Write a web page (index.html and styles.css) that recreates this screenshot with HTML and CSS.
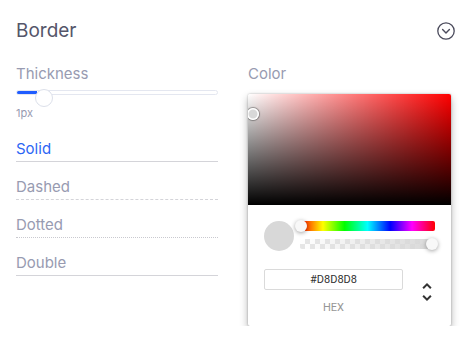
FILE: index.html
```html
<!DOCTYPE html>
<html lang="en">
  <head>
    <meta charset="UTF-8" />
    <meta name="viewport" content="width=device-width, initial-scale=1.0" />
    <title>Border</title>
    <link rel="stylesheet" href="styles.css">
  </head>
  <body>
    <div class="panel">
      <div class="header">
        <h1>Border</h1>
        <svg class="toggle-icon" width="18" height="18" viewBox="0 0 18 18">
          <circle cx="9" cy="9" r="8.2" fill="none" stroke="#4b4b5c" stroke-width="1.3" />
          <path d="M5.6 7.6 L9 11 L12.4 7.6" fill="none" stroke="#4b4b5c" stroke-width="1.4" stroke-linecap="round" stroke-linejoin="round" />
        </svg>
      </div>

      <div class="columns">
        <div class="col">
          <div class="label">Thickness</div>
          <div class="slider">
            <div class="track"><div class="fill"></div></div>
            <div class="thumb"></div>
          </div>
          <div class="value">1px</div>
          <ul class="styles">
            <li class="active solid">Solid</li>
            <li class="dashed">Dashed</li>
            <li class="dotted">Dotted</li>
            <li class="solid">Double</li>
          </ul>
        </div>

        <div class="col">
          <div class="label">Color</div>
          <div class="picker">
            <div class="saturation">
              <div class="pointer"></div>
            </div>
            <div class="picker-body">
              <div class="controls">
                <div class="swatch"></div>
                <div class="bars">
                  <div class="hue"><div class="knob knob-start"></div></div>
                  <div class="alpha"><div class="knob knob-end"></div></div>
                </div>
              </div>
              <div class="fields">
                <div class="field">
                  <input type="text" value="#D8D8D8" />
                  <label>hex</label>
                </div>
                <div class="arrows">
                  <svg viewBox="0 0 24 24" width="24" height="24">
                    <path fill="#333" d="M12,18.17L8.83,15L7.42,16.41L12,21L16.59,16.41L15.17,15M12,5.83L15.17,9L16.58,7.59L12,3L7.41,7.59L8.83,9L12,5.83Z" />
                  </svg>
                </div>
              </div>
            </div>
          </div>
        </div>
      </div>
    </div>
  </body>
</html>
```

FILE: styles.css
```css
body {
  margin: 0;
  background: #fff;
  font-family: Inter, "Noto Sans", sans-serif;
}
.panel {
  padding: 19px 14px 0 16px;
}
.header {
  display: flex;
  justify-content: space-between;
  align-items: center;
  height: 24px;
}
h1 {
  margin: 0;
  font-size: 19px;
  line-height: 24px;
  font-weight: 400;
  color: #55566a;
}
.toggle-icon {
  display: block;
  margin-top: -1px;
}
.columns {
  display: grid;
  grid-template-columns: 202px 203px;
  column-gap: 30px;
  margin-top: 21px;
}
.label {
  font-size: 15px;
  line-height: 20px;
  color: #989bb1;
}
.slider {
  position: relative;
  height: 16px;
  margin-top: 5px;
}
.track {
  margin-top: 6px;
  height: 3px;
  border: 1px solid #e4e7f0;
  border-radius: 3px;
  background: #fff;
}
.fill {
  width: 20px;
  height: 100%;
  background: #1f5cff;
  border-radius: 3px 0 0 3px;
}
.thumb {
  position: absolute;
  left: 19px;
  top: -1px;
  width: 16px;
  height: 16px;
  border: 1px solid #dce0ea;
  border-radius: 50%;
  background: #fff;
}
.value {
  font-size: 11px;
  line-height: 14px;
  color: #989bb1;
}
.styles {
  list-style: none;
  margin: 4px 0 0;
  padding: 0;
}
.styles li {
  padding: 15px 0 2px;
  font-size: 15px;
  line-height: 20px;
  color: #989bb1;
}
.styles li.solid {
  border-bottom: 1px solid #d4d4d9;
}
.styles li.dashed {
  border-bottom: 1px dashed #d4d4d9;
}
.styles li.dotted {
  border-bottom: 1px dotted #c9c9cf;
}
.styles li.active {
  color: #2c66f4;
}
.picker {
  margin-top: 10px;
  background: #fff;
  border-radius: 2px;
  box-shadow: 0 0 2px rgba(0, 0, 0, 0.3), 0 4px 8px rgba(0, 0, 0, 0.3);
  font-family: Roboto, "Liberation Sans", sans-serif;
}
.saturation {
  position: relative;
  height: 111px;
  border-radius: 2px 2px 0 0;
  overflow: hidden;
  background: linear-gradient(to top, #000, rgba(0, 0, 0, 0)),
    linear-gradient(to right, #fff, rgba(255, 255, 255, 0)), #f00;
}
.pointer {
  position: absolute;
  left: -1px;
  top: 14px;
  width: 12px;
  height: 12px;
  border-radius: 50%;
  background: #d8d8d8;
  box-shadow: inset 0 0 0 1.5px #fff, 0 0 1px 1px rgba(0, 0, 0, 0.35);
}
.picker-body {
  padding: 16px 16px 12px;
}
.controls {
  display: flex;
  gap: 6px;
}
.swatch {
  width: 30px;
  height: 30px;
  border-radius: 50%;
  background: #d8d8d8;
}
.bars {
  flex: 1;
}
.hue,
.alpha {
  position: relative;
  height: 10px;
  border-radius: 2px;
}
.hue {
  background: linear-gradient(to right, #f00 0%, #ff0 17%, #0f0 33%, #0ff 50%, #00f 67%, #f0f 83%, #f00 100%);
}
.alpha {
  margin-top: 8px;
  background: linear-gradient(to right, rgba(216, 216, 216, 0), #d8d8d8),
    repeating-conic-gradient(#e6e6e6 0 25%, #fff 0 50%) 0 0 / 10px 10px;
}
.knob {
  position: absolute;
  top: -1px;
  width: 12px;
  height: 12px;
  border-radius: 50%;
  background: #f8f8f8;
  box-shadow: 0 1px 4px rgba(0, 0, 0, 0.37);
}
.knob-start {
  left: -5px;
}
.knob-end {
  right: -3px;
}
.fields {
  display: flex;
  margin-top: 18px;
}
.field {
  flex: 1;
}
.field input {
  display: block;
  box-sizing: border-box;
  width: 100%;
  height: 21px;
  margin: 0;
  padding: 0;
  border: 1px solid #dadada;
  border-radius: 2px;
  box-shadow: none;
  font-family: Roboto, "Liberation Sans", sans-serif;
  font-size: 11px;
  color: #333;
  text-align: center;
  outline: none;
}
.field label {
  display: block;
  margin-top: 12px;
  font-size: 11px;
  line-height: 12px;
  color: #969696;
  text-transform: uppercase;
  text-align: center;
}
.arrows {
  width: 32px;
  display: flex;
  justify-content: flex-end;
}
.arrows svg {
  display: block;
  margin-top: 11px;
  margin-right: -4px;
}
```
